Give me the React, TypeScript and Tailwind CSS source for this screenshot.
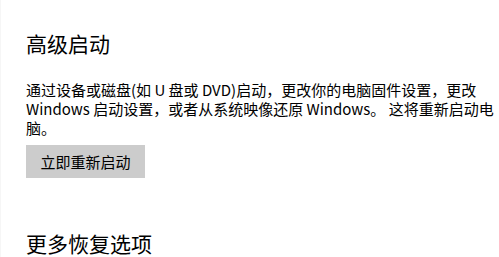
import React from "react";

export default function App() {
  return (
    <div
      className="w-[499px] h-[257px] overflow-hidden bg-white border-l border-[#f6f6f6] text-black"
      style={{ fontFamily: '"Noto Sans CJK SC", "Noto Sans", sans-serif' }}
    >
      <div className="pl-[25px] pr-0 pt-[29px]">
        <h2 className="text-[21px] leading-[28px] font-normal">高级启动</h2>
        <p className="mt-[23px] text-[15px] leading-[19px]">
          通过设备或磁盘(如 U 盘或 DVD)启动，更改你的电脑固件设置，更改 Windows 启动设置，或者从系统映像还原 Windows。 这将重新启动电脑。
        </p>
        <button className="mt-[8px] h-[33px] w-[119px] bg-[#cccccc] text-[15px] leading-[19px] text-black">
          立即重新启动
        </button>
        <h2 className="mt-[55px] text-[21px] leading-[21px] font-normal">更多恢复选项</h2>
      </div>
    </div>
  );
}
